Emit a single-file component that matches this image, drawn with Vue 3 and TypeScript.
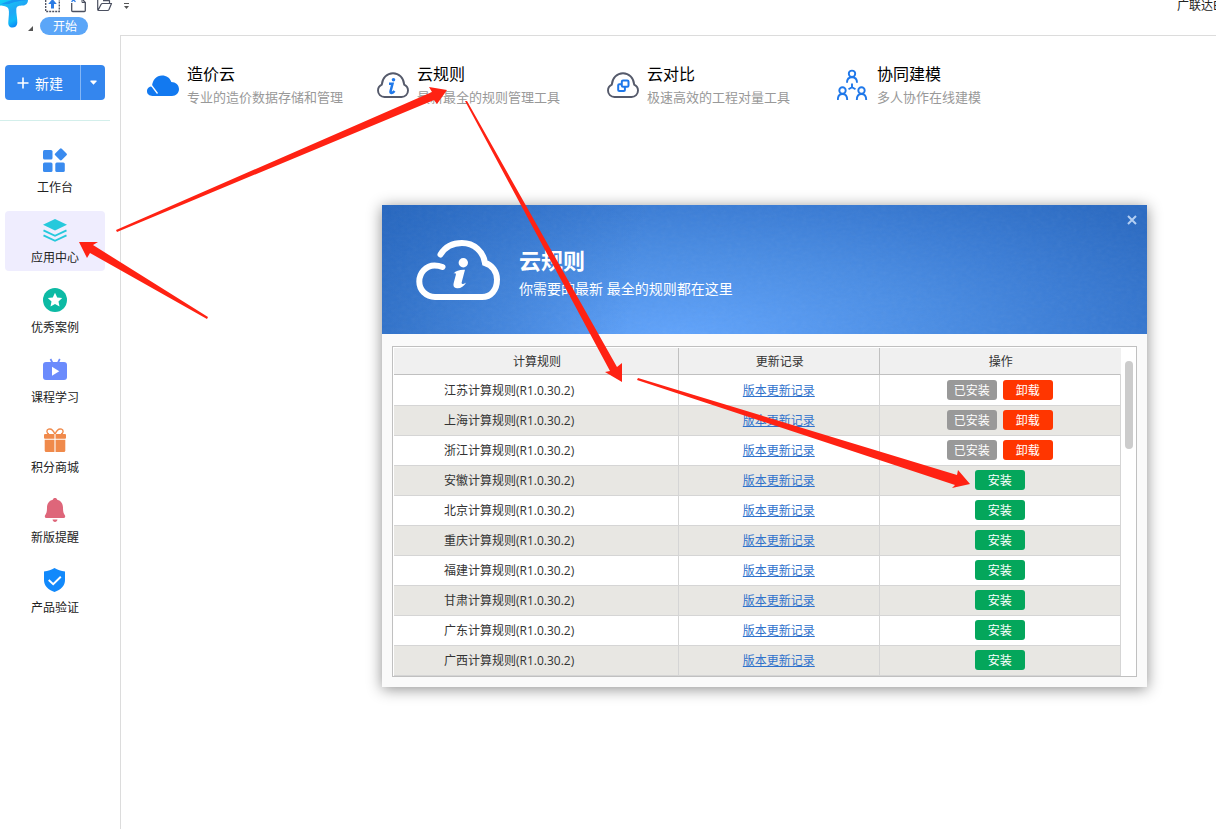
<script setup lang="ts">
type IconName = 'grid' | 'layers' | 'star' | 'tv' | 'gift' | 'bell' | 'shield'
type FeatureIcon = 'cloud' | 'info' | 'compare' | 'team'

interface NavItem {
  label: string
  icon: IconName
  active?: boolean
}

interface Feature {
  title: string
  desc: string
  icon: FeatureIcon
}

interface Rule {
  region: string
  installed: boolean
}

const navItems: NavItem[] = [
  { label: '工作台', icon: 'grid' },
  { label: '应用中心', icon: 'layers', active: true },
  { label: '优秀案例', icon: 'star' },
  { label: '课程学习', icon: 'tv' },
  { label: '积分商城', icon: 'gift' },
  { label: '新版提醒', icon: 'bell' },
  { label: '产品验证', icon: 'shield' },
]

const features: Feature[] = [
  { title: '造价云', desc: '专业的造价数据存储和管理', icon: 'cloud' },
  { title: '云规则', desc: '最新最全的规则管理工具', icon: 'info' },
  { title: '云对比', desc: '极速高效的工程对量工具', icon: 'compare' },
  { title: '协同建模', desc: '多人协作在线建模', icon: 'team' },
]

const rules: Rule[] = [
  { region: '江苏', installed: true },
  { region: '上海', installed: true },
  { region: '浙江', installed: true },
  { region: '安徽', installed: false },
  { region: '北京', installed: false },
  { region: '重庆', installed: false },
  { region: '福建', installed: false },
  { region: '甘肃', installed: false },
  { region: '广东', installed: false },
  { region: '广西', installed: false },
]

// Hand-drawn guide arrows laid over the window
const arrows: string[] = [
  '116,230 432,92 429,87 447,90 437,104 434,100 117,232',
  '465,101 467,101 617,367 622,363 622,382 605,372 610,371',
  '208,317 93,245 98,242 79,242 87,258 90,253 207,319',
  '638,378 957,475 958,470 970,484 952,488 955,485 637,380',
]
</script>

<template>
  <div class="page">
    <header class="topbar">
      <svg class="logo" width="28" height="28" viewBox="0 0 28 28" aria-hidden="true">
        <defs>
          <linearGradient id="logo-fill" x1="0" y1="0" x2="0.6" y2="1">
            <stop offset="0" stop-color="#12d3f6" />
            <stop offset="0.5" stop-color="#1fa6f5" />
            <stop offset="0.75" stop-color="#11b9f8" />
            <stop offset="1" stop-color="#0a7bf3" />
          </linearGradient>
        </defs>
        <path d="M0 0H28C28 3 26 5.500 23 5.500C19 5.500 16.500 6 16.300 9C16 13 17.500 18 17.300 23C17 26 15 27.500 12.500 27.500C9.500 27.500 8 25.500 8.300 22C8.600 17 9.500 12 8.500 9C7.500 6 3 6 0 5.500Z" fill="url(#logo-fill)" />
        <path d="M9 4C14 2 18 1 27 0H12C8 1 4 3 0 4.500Z" fill="#1479ee" opacity="0.55" />
      </svg>
      <svg class="corner" width="5" height="5" viewBox="0 0 5 5" aria-hidden="true">
        <path d="M5 0V5H0Z" fill="#555" />
      </svg>
      <div class="topbar-main">
        <div class="quick">
          <button type="button" aria-label="上传">
            <svg width="16" height="13" viewBox="0 0 16 13">
              <path d="M0.700 0V11.500H14.300V0" fill="none" stroke="#4b5060" stroke-width="1.300" stroke-dasharray="2 1" />
              <path d="M7.500 -1L11.800 4H9V8.500H6V4H3.200Z" fill="#2b7be4" />
            </svg>
          </button>
          <button type="button" aria-label="新建文件">
            <svg width="16" height="13" viewBox="0 0 16 13">
              <path d="M0.700 3V10.500Q0.700 11.500 1.700 11.500H13.300Q14.300 11.500 14.300 10.500V2.500L12 0" fill="none" stroke="#4b5060" stroke-width="1.300" />
              <path d="M11 0V2.500H14.500" fill="none" stroke="#4b5060" />
              <path d="M0.500 1.800L2.500 0L4.500 1.800" fill="none" stroke="#2b7be4" stroke-width="1.300" />
            </svg>
          </button>
          <button type="button" aria-label="打开文件">
            <svg width="16" height="13" viewBox="0 0 16 13">
              <path d="M0.700 0V9.500Q0.700 10.500 1.700 10.500H10.500Q11.500 10.500 12 9.500L14.500 3.500H5.500Q4.500 3.500 4 4.500L1.200 10M12.500 3.500V0.700H6" fill="none" stroke="#4b5060" stroke-width="1.200" stroke-linejoin="round" />
            </svg>
          </button>
          <button type="button" aria-label="自定义快速访问">
            <svg width="8" height="13" viewBox="0 0 8 13">
              <path d="M1 3.500H6" stroke="#555" />
              <path d="M1 6H6L3.500 9Z" fill="#555" />
            </svg>
          </button>
        </div>
        <button type="button" class="tab">开始</button>
      </div>
      <span class="app-title">广联达B</span>
    </header>

    <div class="body">
      <aside class="sidebar">
        <div class="new-group">
          <button type="button" class="new-btn">
            <svg width="12" height="12" viewBox="0 0 12 12" aria-hidden="true">
              <path d="M6 0.500V11.500M0.500 6H11.500" stroke="#fff" stroke-width="1.600" />
            </svg>
            <span>新建</span>
          </button>
          <button type="button" class="new-more" aria-label="更多新建方式">
            <svg width="7" height="5" viewBox="0 0 7 5"><path d="M0.500 0.500H6.500V1.500L3.500 4.700L0.500 1.500Z" fill="#fff" /></svg>
          </button>
        </div>

        <nav class="nav">
          <a v-for="item in navItems" :key="item.label" href="#" class="nav-item" :class="{ active: item.active }">
            <svg width="24" height="24" viewBox="0 0 24 24" aria-hidden="true">
              <g v-if="item.icon === 'grid'" fill="#3a8bef">
                <rect x="0" y="2" width="9.500" height="9.500" rx="1.500" />
                <rect x="0" y="14.500" width="9.500" height="9.500" rx="1.500" />
                <rect x="12.300" y="14.500" width="9.500" height="9.500" rx="1.500" />
                <rect x="13.200" y="1.700" width="9.300" height="9.300" rx="1.300" transform="rotate(45 17.850 6.350)" />
              </g>
              <g v-else-if="item.icon === 'layers'">
                <path d="M12 1L24 6.700L12 12.500L0 6.700Z" fill="#26c9dc" />
                <path d="M0.500 12.300L12 17.800L23.500 12.300M0.500 17.300L12 22.800L23.500 17.300" fill="none" stroke="#26c9dc" stroke-width="1.900" />
              </g>
              <g v-else-if="item.icon === 'star'">
                <circle cx="12" cy="12" r="12" fill="#0cbaa4" />
                <path d="M12 4.800L14.200 9.400L19.200 10L15.500 13.500L16.500 18.500L12 16L7.500 18.500L8.500 13.500L4.800 10L9.800 9.400Z" fill="#fff" />
              </g>
              <g v-else-if="item.icon === 'tv'">
                <rect x="0" y="4" width="24" height="18" rx="3" fill="#6b8bfc" />
                <path d="M7.500 1L9.500 5M16.800 1L14.800 5" stroke="#6b8bfc" stroke-width="1.700" />
                <path d="M9 8.800L16.300 13.300L9 17.800Z" fill="#fff" />
              </g>
              <g v-else-if="item.icon === 'gift'">
                <path d="M12 6.200C10 1.500 7.500 0.500 5.500 1.200C3.200 2 3.500 5.500 6 6M12 6.200C14 1.500 16.500 0.500 18.500 1.200C20.800 2 20.500 5.500 18 6" fill="none" stroke="#f08a4b" stroke-width="1.400" />
                <rect x="1" y="6" width="22" height="4.700" rx="1" fill="#f08a4b" />
                <path d="M1.700 11.700H22.300V22.500Q22.300 24 20.800 24H3.200Q1.700 24 1.700 22.500Z" fill="#f08a4b" />
                <path d="M12 6V24" stroke="#fff" stroke-width="1.300" opacity="0.850" />
              </g>
              <g v-else-if="item.icon === 'bell'" fill="#de667a">
                <path d="M12 0C13.200 0 14 0.700 14.200 1.700C18.200 2.700 20 5.800 20 9.500C20 13.500 20.300 15 22 17.500C22.500 18.800 22 20 20.500 20H3.500C2 20 1.500 18.800 2 17.500C3.700 15 4 13.500 4 9.500C4 5.800 5.800 2.700 9.800 1.700C10 0.700 10.800 0 12 0Z" />
                <path d="M9.500 21.600H14.500C14.200 23 13.300 24 12 24S9.800 23 9.500 21.600Z" />
              </g>
              <g v-else>
                <path d="M11.500 0C14.500 2 18 3 22 3.500V12C22 17.500 18 21.800 11.500 24C5 21.800 1 17.500 1 12V3.500C5 3 8.500 2 11.500 0Z" fill="#1289fb" />
                <path d="M5.700 12L10.200 16.300L17.800 8.800" fill="none" stroke="#fff" stroke-width="1.900" />
              </g>
            </svg>
            <span>{{ item.label }}</span>
          </a>
        </nav>
      </aside>

      <main class="content">
        <section class="features">
          <a v-for="f in features" :key="f.title" href="#" class="feature">
            <svg width="32" height="32" viewBox="0 0 32 32" aria-hidden="true">
              <g v-if="f.icon === 'cloud'">
                <path d="M5 17.500C5.400 11 9.500 6.600 15 6.600C19.500 6.600 23 9 24.300 12.900C28.700 12.900 32 16 32 20C32 24 29 27 25 27H5.500C2.300 27 0 25 0 22.300C0 19.500 2 17.500 5 17.500Z" fill="#1279f0" />
                <path d="M4.500 16.500L10.500 24.500" stroke="#fff" stroke-width="1.300" />
              </g>
              <g v-else-if="f.icon === 'team'" fill="none" stroke="#1f78ea" stroke-width="1.900">
                <circle cx="15" cy="4.800" r="3.200" />
                <path d="M10 13.700C10 10.300 11.500 8.200 15 8.200S20 10.300 20 13.700" />
                <circle cx="5.500" cy="21.500" r="3.200" />
                <path d="M0.800 31C0.800 27 2.200 25 5.500 25S10.200 27 10.200 31" />
                <circle cx="24.500" cy="21.500" r="3.200" />
                <path d="M19.800 31C19.800 27 21.200 25 24.500 25S29.200 27 29.200 31" />
                <path d="M15 14.500V18.200L11.500 20.300M15 18.200L18.500 20.300" />
              </g>
              <g v-else fill="none">
                <path d="M7.500 28C3.800 28 1 25.300 1 21.600C1 18.900 2.600 16.800 4.800 15.700C5.300 9 10 4.200 16 4.200S26.700 9 27.200 15.700C29.400 16.800 31 18.900 31 21.600C31 25.300 28.200 28 24.500 28Z" stroke="#555a6b" stroke-width="1.900" />
                <template v-if="f.icon === 'info'">
                  <circle cx="16.500" cy="10.700" r="1.800" fill="#1f78ea" />
                  <path d="M12 14.800H15.500L13.500 22.500C13.200 24.700 15.500 24.500 17.500 22" stroke="#1f78ea" stroke-width="2.500" />
                </template>
                <g v-else stroke="#1f78ea" stroke-width="2">
                  <rect x="14.800" y="11.500" width="6.700" height="6.300" rx="1.200" />
                  <path d="M14.800 15.200H12.300Q11.200 15.200 11.200 16.300V21Q11.200 22.100 12.300 22.100H16.800Q17.900 22.100 17.900 21V17.800" />
                </g>
              </g>
            </svg>
            <span class="feature-text">
              <span class="feature-title">{{ f.title }}</span>
              <span class="feature-desc">{{ f.desc }}</span>
            </span>
          </a>
        </section>
      </main>
    </div>

    <section class="dialog" role="dialog" aria-labelledby="dialog-title">
      <div class="banner">
        <svg class="grain" width="100%" height="100%" aria-hidden="true">
          <filter id="paper">
            <feTurbulence type="fractalNoise" baseFrequency="0.2 0.3" numOctaves="3" seed="4" />
            <feColorMatrix type="saturate" values="0" />
          </filter>
          <rect width="100%" height="100%" filter="url(#paper)" />
        </svg>
        <svg class="banner-icon" width="84" height="60" viewBox="0 0 84 60" aria-hidden="true">
          <path d="M24.500 14.500C29 7 37 3 46 3C58 3 67.500 11.500 69 23C76 25 81 31.500 81 39.500C81 50 75 57 66 57H19C10 57 3.300 50 3.300 41.500S10 25.500 18.500 25.500C21.500 25.500 24 26 26.500 27" fill="none" stroke="#fff" stroke-width="6" stroke-linecap="round" />
          <circle cx="47.300" cy="22.700" r="4.700" fill="#fff" />
          <path d="M37.500 33.500C40 30.500 44 29.500 49 29.800L45.700 42.300C45.300 44.300 46.500 44.500 50 42.700C48 46.500 44.500 48.500 41 48.200C38 48 37 46 37.700 43L39.800 35C40.200 33.500 39.500 33 37.500 33.500Z" fill="#fff" />
        </svg>
        <div class="banner-text">
          <h1 id="dialog-title">云规则</h1>
          <p>你需要的最新 最全的规则都在这里</p>
        </div>
        <button type="button" class="close" aria-label="关闭">
          <svg width="10" height="10" viewBox="0 0 10 10"><path d="M1 1L9 9M9 1L1 9" stroke="#b4cff3" stroke-width="2" /></svg>
        </button>
      </div>

      <div class="dialog-body">
        <div class="frame">
          <table>
            <colgroup>
              <col class="col-rule" />
              <col class="col-log" />
              <col />
            </colgroup>
            <thead>
              <tr>
                <th scope="col">计算规则</th>
                <th scope="col">更新记录</th>
                <th scope="col">操作</th>
              </tr>
            </thead>
            <tbody>
              <tr v-for="r in rules" :key="r.region">
                <td class="rule">{{ r.region }}计算规则(R1.0.30.2)</td>
                <td><a href="#" class="log">版本更新记录</a></td>
                <td>
                  <div class="actions">
                    <template v-if="r.installed">
                      <button type="button" class="btn done" disabled>已安装</button>
                      <button type="button" class="btn remove">卸载</button>
                    </template>
                    <button v-else type="button" class="btn install">安装</button>
                  </div>
                </td>
              </tr>
            </tbody>
          </table>
          <div class="scroll"><div class="thumb"></div></div>
        </div>
      </div>
    </section>

    <svg class="arrows" width="1216" height="829" viewBox="0 0 1216 829" aria-hidden="true">
      <polygon v-for="points in arrows" :key="points" :points="points" fill="#ff2213" />
    </svg>
  </div>
</template>

<style>
body {
  margin: 0;
  background: #fff;
}
</style>

<style scoped>
.page {
  position: relative;
  display: flex;
  flex-direction: column;
  min-height: 100vh;
  overflow: hidden;
  background: #fff;
  color: #222;
  font-family: "Open Sans", "Noto Sans CJK SC", sans-serif;
  font-size: 12px;
  line-height: 20px;
}

button {
  margin: 0;
  padding: 0;
  border: 0;
  background: none;
  color: inherit;
  font: inherit;
}

a {
  color: inherit;
  text-decoration: none;
}

svg {
  display: block;
  flex: none;
}

.topbar {
  display: flex;
  height: 35px;
}

.corner {
  margin: 26px 7px 0 0;
}

.quick {
  display: flex;
  gap: 10px;
  height: 13px;
  padding-left: 5px;
}

.tab {
  display: block;
  width: 48px;
  height: 18px;
  margin-top: 4px;
  padding: 2px 0 0 2px;
  border-radius: 9px;
  background: #5ba6f8;
  color: #fff;
  line-height: 16px;
}

.app-title {
  width: 39px;
  margin-left: auto;
  line-height: 12px;
  white-space: nowrap;
}

.body {
  display: flex;
  flex: 1;
}

.sidebar {
  width: 120px;
  padding-top: 30px;
}

.new-group {
  display: flex;
  height: 35px;
  margin: 0 15px 20px 5px;
  overflow: hidden;
  border-radius: 4px;
  background: #3486ee;
  color: #fff;
}

.new-btn {
  display: flex;
  flex: 1;
  align-items: center;
  gap: 6px;
  padding-left: 12px;
  border-right: 1px solid #84b6f5;
  font-size: 14px;
}

.new-btn span {
  padding-top: 2px;
}

.new-more {
  display: flex;
  align-items: center;
  justify-content: center;
  width: 24px;
}

.nav {
  display: flex;
  flex-direction: column;
  gap: 10px;
  margin-right: 10px;
  padding: 20px 5px 0;
  border-top: 1px solid #d3efeb;
}

.nav-item {
  display: flex;
  flex-direction: column;
  align-items: center;
  gap: 6px;
  height: 53px;
  padding-top: 7px;
  border-radius: 4px;
}

.nav-item.active {
  background: #efedfe;
}

.content {
  flex: 1;
  border-top: 1px solid #dcdcdc;
  border-left: 1px solid #dcdcdc;
}

.features {
  display: grid;
  grid-template-columns: repeat(auto-fill, 230px);
  padding: 26px;
}

.feature {
  display: flex;
  gap: 8px;
}

.feature svg {
  margin-top: 7px;
}

.feature-text {
  display: flex;
  flex-direction: column;
}

.feature-title {
  color: #000;
  font-size: 16px;
  line-height: 24px;
}

.feature-desc {
  color: #999;
  font-size: 13px;
  line-height: 22px;
}

.dialog {
  position: absolute;
  top: 205px;
  right: 69px;
  left: 382px;
  background: #fafafa;
  box-shadow: 0 2px 14px rgba(0, 0, 0, 0.45);
}

.banner {
  position: relative;
  display: flex;
  align-items: center;
  gap: 19px;
  height: 129px;
  padding-left: 34px;
  background:
    linear-gradient(100deg, rgba(28, 92, 180, 0.55) 0%, rgba(28, 92, 180, 0) 34%),
    radial-gradient(ellipse 75% 150% at 39% 106%, #62a5fd 0%, #4a8de4 45%, #3b7dd6 70%, #2b6bc3 100%);
  color: #fff;
}

.grain {
  position: absolute;
  inset: 0;
  opacity: 0.06;
}

.banner-icon,
.banner-text {
  position: relative;
}

.banner-text {
  padding-top: 7px;
}

h1 {
  margin: 0;
  font-size: 22px;
  font-weight: 700;
  line-height: 32px;
}

p {
  margin: 0;
  font-size: 14px;
  line-height: 26px;
}

.close {
  position: absolute;
  top: 10px;
  right: 10px;
}

.dialog-body {
  padding: 12px 10px 10px;
}

.frame {
  display: flex;
  padding: 1px 0 0 1px;
  border: 1px solid #c0c0c0;
  background: #fff;
}

table {
  flex: 1;
  border-spacing: 0;
  table-layout: fixed;
  color: #333;
}

.col-rule {
  width: 39.2%;
}

.col-log {
  width: 27.6%;
}

th {
  height: 24px;
  padding: 2px 0 0 2px;
  border-right: 1px solid #c0c0c0;
  border-bottom: 1px solid #c0c0c0;
  background: #f0f0f0;
  font-weight: 400;
}

th:last-child {
  border-right-color: #f0f0f0;
}

td {
  height: 29px;
  padding: 0;
  border-right: 1px solid #d5d5d5;
  border-bottom: 1px solid #d5d5d5;
  text-align: center;
}

tbody tr:first-child td {
  padding-top: 1px;
}

tbody tr:nth-child(even) {
  background: #e8e7e3;
}

.rule {
  padding-left: 50px;
  text-align: left;
}

.log {
  color: #2f72cc;
  text-decoration: underline;
}

.actions {
  display: flex;
  justify-content: center;
  gap: 6px;
  padding-bottom: 1px;
}

.btn {
  width: 50px;
  height: 20px;
  padding-top: 2px;
  border-radius: 3px;
  color: #fff;
  line-height: 18px;
}

.done {
  background: #999;
}

.remove {
  background: #ff3600;
}

.install {
  background: #04a65b;
}

.scroll {
  width: 15px;
  padding: 13px 3px 0 4px;
  box-sizing: border-box;
}

.thumb {
  height: 88px;
  border-radius: 4px;
  background: #ccc;
}

.arrows {
  position: absolute;
  top: 0;
  left: 0;
  pointer-events: none;
}
</style>
